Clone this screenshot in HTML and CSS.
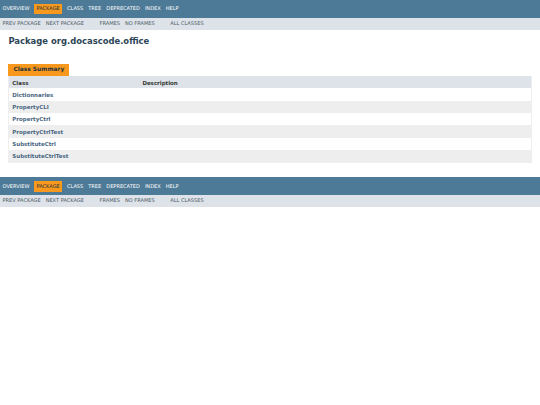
FILE: index.html
```html
<!DOCTYPE html>
<html lang="en">
<head>
<meta charset="utf-8">
<title>org.docascode.office</title>
<link rel="stylesheet" href="styles.css">
</head>
<body>
<nav class="nav">
  <div class="top-nav">
    <ul class="nav-list">
      <li><a href="#">Overview</a></li>
      <li class="current">Package</li>
      <li>Class</li>
      <li><a href="#">Tree</a></li>
      <li><a href="#">Deprecated</a></li>
      <li><a href="#">Index</a></li>
      <li><a href="#">Help</a></li>
    </ul>
  </div>
  <div class="sub-nav">
    <ul class="nav-list">
      <li>Prev Package</li>
      <li>Next Package</li>
    </ul>
    <ul class="nav-list">
      <li><a href="#">Frames</a></li>
      <li><a href="#">No&nbsp;Frames</a></li>
    </ul>
    <ul class="nav-list">
      <li><a href="#">All&nbsp;Classes</a></li>
    </ul>
  </div>
</nav>

<header class="header">
  <h1 class="title">Package org.docascode.office</h1>
</header>

<main class="content">
  <table class="summary">
    <caption><span>Class Summary</span></caption>
    <thead>
      <tr><th class="col-first">Class</th><th class="col-last">Description</th></tr>
    </thead>
    <tbody>
      <tr class="alt"><td class="col-first"><a href="#">Dictionnaries</a></td><td class="col-last"></td></tr>
      <tr class="row"><td class="col-first"><a href="#">PropertyCLI</a></td><td class="col-last"></td></tr>
      <tr class="alt"><td class="col-first"><a href="#">PropertyCtrl</a></td><td class="col-last"></td></tr>
      <tr class="row"><td class="col-first"><a href="#">PropertyCtrlTest</a></td><td class="col-last"></td></tr>
      <tr class="alt"><td class="col-first"><a href="#">SubstituteCtrl</a></td><td class="col-last"></td></tr>
      <tr class="row"><td class="col-first"><a href="#">SubstituteCtrlTest</a></td><td class="col-last"></td></tr>
    </tbody>
  </table>
</main>

<nav class="nav bottom">
  <div class="top-nav">
    <ul class="nav-list">
      <li><a href="#">Overview</a></li>
      <li class="current">Package</li>
      <li>Class</li>
      <li><a href="#">Tree</a></li>
      <li><a href="#">Deprecated</a></li>
      <li><a href="#">Index</a></li>
      <li><a href="#">Help</a></li>
    </ul>
  </div>
  <div class="sub-nav">
    <ul class="nav-list">
      <li>Prev Package</li>
      <li>Next Package</li>
    </ul>
    <ul class="nav-list">
      <li><a href="#">Frames</a></li>
      <li><a href="#">No&nbsp;Frames</a></li>
    </ul>
    <ul class="nav-list">
      <li><a href="#">All&nbsp;Classes</a></li>
    </ul>
  </div>
</nav>
</body>
</html>
```

FILE: styles.css
```css
html, body {
  margin: 0;
  padding: 0;
  background: #ffffff;
}
body {
  color: #353833;
  font-family: "DejaVu Sans", "Liberation Sans", Arial, sans-serif;
  font-size: 5.9px;
}
a {
  color: inherit;
  text-decoration: none;
}
.nav {
  display: flex;
  flex-direction: column;
}
.nav.bottom {
  margin-top: 14px;
}
.top-nav {
  background: #4d7a97;
  color: #ffffff;
  height: 18px;
  box-sizing: border-box;
  padding-top: 4.2px;
  font-size: 5.06px;
}
.sub-nav {
  background: #dee3e9;
  color: #4d5a66;
  height: 12px;
  box-sizing: border-box;
  padding-top: 1px;
  font-size: 5.06px;
  display: flex;
}
.nav-list {
  display: flex;
  margin: 0 10.5px 0 0;
  padding: 0;
  list-style: none;
}
.nav-list li {
  padding: 2.1px 2.53px;
  line-height: 5.9px;
  text-transform: uppercase;
  white-space: nowrap;
}
.nav-list li.current {
  background: #f8981d;
  color: #253441;
  margin: 0 2.1px;
}
.header {
  margin: 0 8.4px;
  padding-top: 2.1px;
}
.title {
  color: #2c4557;
  font-size: 8.44px;
  line-height: 9.8px;
  margin: 5px 0 4px 0;
}
.content {
  padding: 0 8.4px;
  margin-top: 17.5px;
}
.summary {
  width: 100%;
  border-collapse: collapse;
  border-left: 1px solid #eeeeee;
  border-right: 1px solid #eeeeee;
  border-bottom: 1px solid #eeeeee;
}
.summary caption {
  text-align: left;
  padding: 0;
}
.summary caption span {
  display: block;
  width: max-content;
  background: #f8981d;
  color: #253441;
  font-weight: bold;
  font-size: 5.9px;
  line-height: 6.75px;
  padding: 2.1px 5.06px 2.95px 5.06px;
  white-space: nowrap;
}
.summary th {
  background: #dee3e9;
  text-align: left;
  font-size: 5.48px;
  font-weight: bold;
  padding: 3.375px 1.27px 1.27px 2.95px;
  line-height: 7.4px;
}
.summary td {
  padding: 3.375px 1.27px 1.27px 2.95px;
  line-height: 7.7px;
  font-size: 5.48px;
  vertical-align: top;
}
.summary .col-first {
  width: 25%;
}
.summary td.col-first a {
  color: #4a6782;
  font-weight: bold;
}
.summary tr.alt td {
  background: #ffffff;
}
.summary tr.row td {
  background: #eeeeef;
}
```
